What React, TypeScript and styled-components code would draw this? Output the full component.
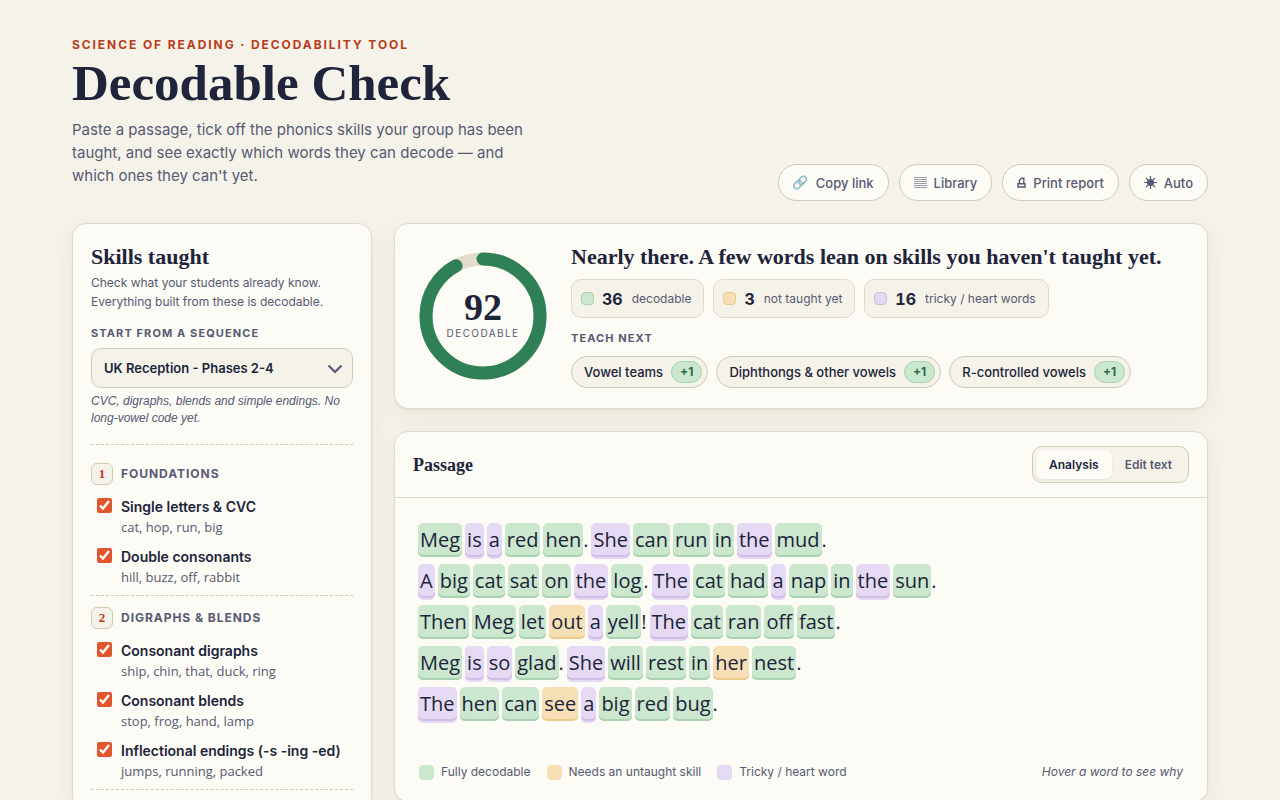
import React from "react";
import styled, { createGlobalStyle } from "styled-components";

const ink = "#20243a";
const soft = "#565a72";
const paper = "#fcfbf5";
const bg = "#f5f2e9";
const line = "#e0dacb";
const lineStrong = "#d3cab6";
const green = "#cbe7cd";
const amber = "#f7dfb5";
const purple = "#e5d9f3";
const serif = '"Liberation Serif", "Times New Roman", serif';
const sans = 'Inter, "Liberation Sans", sans-serif';
const reader = '"Open Sans", "Noto Sans", sans-serif';

type Kind = "ok" | "gap" | "heart";
const fill: Record<Kind, string> = { ok: green, gap: amber, heart: purple };
const edge: Record<Kind, string> = { ok: "#a9d3b0", gap: "#e9c98c", heart: "#cfbde8" };

const Global = createGlobalStyle`
  *, *::before, *::after { box-sizing: border-box; }
  body {
    margin: 0;
    background: ${bg};
    color: ${ink};
    font-family: ${sans};
    font-size: 14px;
    line-height: 20px;
  }
  h1, h2, h3, p, ul { margin: 0; padding: 0; }
  ul { list-style: none; }
  button, select { font: inherit; color: inherit; }
`;

const Page = styled.div`
  max-width: 1184px;
  margin: 0 auto;
  padding: 36px 24px;
`;

const Header = styled.header`
  display: flex;
  justify-content: space-between;
  align-items: flex-end;
  gap: 24px;
  margin-bottom: 22px;
`;

const Intro = styled.div`
  flex: 0 1 470px;
  padding-bottom: 14px;
`;

const Eyebrow = styled.p`
  font-size: 12px;
  line-height: 18px;
  font-weight: 700;
  letter-spacing: 0.16em;
  text-transform: uppercase;
  color: #b93c1c;
`;

const Title = styled.h1`
  font-family: ${serif};
  font-size: 51px;
  line-height: 58px;
  font-weight: 700;
  white-space: nowrap;
`;

const Lede = styled.p`
  margin-top: 6px;
  font-size: 15px;
  line-height: 23px;
  color: ${soft};
`;

const Actions = styled.div`
  display: flex;
  gap: 10px;
`;

const ActionButton = styled.button`
  display: flex;
  align-items: center;
  gap: 7px;
  height: 37px;
  padding: 0 14px;
  border: 1px solid ${lineStrong};
  border-radius: 19px;
  background: ${paper};
  color: ${soft};
  font-size: 13px;
  font-weight: 500;
  white-space: nowrap;
`;

const Emoji = styled.span`
  font-family: "Noto Color Emoji", sans-serif;
  font-size: 13px;
  font-weight: 400;
  opacity: 0.8;
`;

const Columns = styled.main`
  display: grid;
  grid-template-columns: 300px minmax(0, 1fr);
  gap: 22px;
  align-items: start;
`;

const Stack = styled.div`
  display: grid;
  gap: 22px;
`;

const Card = styled.section`
  background: ${paper};
  border: 1px solid ${line};
  border-radius: 14px;
  box-shadow: 0 1px 2px rgba(50, 45, 20, 0.05), 0 8px 24px rgba(50, 45, 20, 0.06);
`;

const SkillsCard = styled(Card)`
  padding: 20px 18px;
`;

const CardTitle = styled.h2`
  font-family: ${serif};
  font-size: 22px;
  line-height: 26px;
  font-weight: 700;
`;

const Hint = styled.p`
  margin-top: 3px;
  font-size: 12px;
  line-height: 19px;
  color: ${soft};
`;

const Label = styled.label`
  display: block;
  margin: 13px 0 6px;
  font-size: 11px;
  line-height: 18px;
  font-weight: 700;
  letter-spacing: 0.1em;
  text-transform: uppercase;
  color: ${soft};
`;

const SelectWrap = styled.div`
  position: relative;
  svg {
    position: absolute;
    right: 10px;
    top: 15px;
    pointer-events: none;
  }
`;

const Select = styled.select`
  display: block;
  width: 100%;
  height: 40px;
  padding: 0 32px 0 12px;
  appearance: none;
  border: 1px solid ${lineStrong};
  border-radius: 10px;
  background: ${bg};
  font-size: 13px;
  font-weight: 600;
`;

const Note = styled.p`
  margin-top: 5px;
  padding-bottom: 17px;
  border-bottom: 1px dashed ${lineStrong};
  font-family: "Liberation Sans", Arial, sans-serif;
  font-size: 12px;
  line-height: 17px;
  font-style: italic;
  color: ${soft};
`;

const Group = styled.section`
  padding: 11px 0 8px;
  border-bottom: 1px dashed ${lineStrong};
  &:first-of-type { padding-top: 18px; }
`;

const GroupTitle = styled.h3`
  display: flex;
  align-items: center;
  gap: 8px;
  margin-bottom: 11px;
  font-size: 12px;
  line-height: 22px;
  font-weight: 700;
  letter-spacing: 0.08em;
  text-transform: uppercase;
  color: ${soft};
`;

const Step = styled.span`
  width: 22px;
  height: 22px;
  border: 1px solid ${lineStrong};
  border-radius: 6px;
  background: ${bg};
  color: #b93c1c;
  font-family: ${serif};
  font-size: 13px;
  line-height: 20px;
  letter-spacing: 0;
  text-align: center;
`;

const SkillList = styled.ul`
  display: grid;
  gap: 9px;
`;

const Skill = styled.label`
  display: flex;
  gap: 9px;
  padding-left: 6px;
`;

const Tick = styled.input`
  flex: none;
  width: 15px;
  height: 15px;
  margin: 2px 0 0;
  accent-color: #e2552f;
`;

const SkillName = styled.span`
  display: block;
  font-size: 14px;
  line-height: 21px;
  font-weight: 600;
`;

const SkillSample = styled.span`
  display: block;
  font-family: ${reader};
  font-size: 13px;
  line-height: 20px;
  color: ${soft};
`;

const ScoreCard = styled(Card)`
  display: flex;
  align-items: center;
  gap: 24px;
  padding: 20px 24px;
`;

const Gauge = styled.div`
  position: relative;
  flex: none;
  width: 128px;
  height: 128px;
  svg { display: block; }
`;

const GaugeText = styled.div`
  position: absolute;
  inset: 0;
  display: flex;
  flex-direction: column;
  align-items: center;
  justify-content: center;
`;

const Score = styled.strong`
  font-family: ${serif};
  font-size: 38px;
  line-height: 34px;
`;

const ScoreLabel = styled.span`
  font-size: 10px;
  line-height: 18px;
  letter-spacing: 0.14em;
  text-transform: uppercase;
  color: ${soft};
`;

const Verdict = styled.div`
  flex: 1;
  min-width: 0;
`;

const Row = styled.div<{ $gap: number }>`
  display: flex;
  flex-wrap: wrap;
  gap: ${(p) => p.$gap}px;
`;

const Stat = styled.div`
  display: flex;
  align-items: center;
  gap: 8px;
  height: 39px;
  margin-top: 9px;
  padding: 0 12px 0 9px;
  border: 1px solid ${line};
  border-radius: 10px;
  background: ${bg};
  font-size: 12px;
  color: ${soft};
  strong {
    margin-right: 1px;
    color: ${ink};
    font-size: 16px;
    font-variant-numeric: tabular-nums;
  }
`;

const Swatch = styled.i<{ $kind: Kind; $size: number }>`
  width: ${(p) => p.$size}px;
  height: ${(p) => p.$size}px;
  border: 1px solid ${(p) => (p.$size < 15 ? edge[p.$kind] : fill[p.$kind])};
  border-radius: 4px;
  background: ${(p) => fill[p.$kind]};
`;

const Subhead = styled.h3`
  margin: 11px 0 9px;
  font-size: 11px;
  line-height: 18px;
  font-weight: 700;
  letter-spacing: 0.1em;
  text-transform: uppercase;
  color: ${soft};
`;

const Suggestion = styled.button`
  display: flex;
  align-items: center;
  gap: 8px;
  height: 32px;
  padding: 0 5px 0 12px;
  border: 1px solid ${lineStrong};
  border-radius: 16px;
  background: ${bg};
  font-size: 13px;
  font-weight: 500;
`;

const Gain = styled.span`
  padding: 0 8px;
  border: 1px solid #a9d3b0;
  border-radius: 11px;
  background: ${green};
  color: #2c6b47;
  font-size: 12px;
  line-height: 20px;
  font-weight: 700;
`;

const PassageHead = styled.div`
  display: flex;
  align-items: center;
  justify-content: space-between;
  padding: 14px 18px;
  border-bottom: 1px solid ${line};
`;

const PassageTitle = styled.h2`
  font-family: ${serif};
  font-size: 18px;
  line-height: 24px;
`;

const Segmented = styled.div`
  display: flex;
  padding: 3px;
  border: 1px solid ${lineStrong};
  border-radius: 10px;
  background: ${bg};
`;

const Segment = styled.button<{ $on?: boolean }>`
  height: 29px;
  padding: 0 13px;
  border: 0;
  border-radius: 7px;
  background: ${(p) => (p.$on ? paper : "transparent")};
  box-shadow: ${(p) => (p.$on ? "0 1px 2px rgba(60, 45, 20, 0.08)" : "none")};
  color: ${(p) => (p.$on ? ink : soft)};
  font-size: 12px;
  font-weight: 600;
`;

const Text = styled.div`
  display: grid;
  gap: 7px;
  padding: 25px 23px 41px;
  font-family: ${reader};
  font-size: 20px;
  line-height: 34px;
`;

const Sentence = styled.p`
  display: flex;
  flex-wrap: wrap;
  gap: 3px;
`;

const Word = styled.span<{ $kind: Kind }>`
  display: inline-block;
  height: 34px;
  padding: 0 2px;
  border-radius: 5px;
  background: ${(p) => fill[p.$kind]};
  box-shadow: inset 0 -2px 0 ${(p) => edge[p.$kind]}${(p) => (p.$kind === "heart" ? `, 0 2px 0 ${purple}` : "")};
`;

const Legend = styled.div`
  display: flex;
  align-items: center;
  gap: 16px;
  padding: 0 24px 19px;
  font-size: 12px;
  color: ${soft};
  em { margin-left: auto; }
`;

const LegendItem = styled.span`
  display: flex;
  align-items: center;
  gap: 7px;
`;

const groups = [
  {
    title: "Foundations",
    skills: [
      ["Single letters & CVC", "cat, hop, run, big"],
      ["Double consonants", "hill, buzz, off, rabbit"],
    ],
  },
  {
    title: "Digraphs & blends",
    skills: [
      ["Consonant digraphs", "ship, chin, that, duck, ring"],
      ["Consonant blends", "stop, frog, hand, lamp"],
      ["Inflectional endings (-s -ing -ed)", "jumps, running, packed"],
    ],
  },
];

const passage = [
  "Meg is a red hen. She can run in the mud.",
  "A big cat sat on the log. The cat had a nap in the sun.",
  "Then Meg let out a yell! The cat ran off fast.",
  "Meg is so glad. She will rest in her nest.",
  "The hen can see a big red bug.",
];

const heartWords = ["is", "a", "she", "the", "so"];
const untaught = ["out", "her", "see"];

function kindOf(word: string): Kind {
  const w = word.toLowerCase();
  if (heartWords.includes(w)) return "heart";
  return untaught.includes(w) ? "gap" : "ok";
}

const LinesIcon = () => (
  <svg width="13" height="13" viewBox="0 0 13 13" stroke="#9b9da8" aria-hidden>
    <path d="M0 1.5h13M0 3.5h13M0 5.5h13M0 7.5h13M0 9.5h13M0 11.5h13" />
  </svg>
);

const PrintIcon = () => (
  <svg width="9" height="11" viewBox="0 0 9 11" fill="none" stroke={soft} strokeWidth="1.4" aria-hidden>
    <path d="M1 6.8h7V10H1zM2.4 6.8V3.6L4.6 1.2H6.8V6.8" />
  </svg>
);

const SunIcon = () => (
  <svg width="13" height="13" viewBox="0 0 13 13" stroke={soft} strokeWidth="1.2" aria-hidden>
    <circle cx="6.5" cy="6.5" r="3" fill={soft} />
    <path d="M6.5 0v3M6.5 10v3M0 6.5h3M10 6.5h3M1.9 1.9l2 2M9.1 9.1l2 2M11.1 1.9l-2 2M3.9 9.1l-2 2" />
  </svg>
);

const actions: [React.ReactNode, string][] = [
  [<Emoji aria-hidden>🔗</Emoji>, "Copy link"],
  [<LinesIcon />, "Library"],
  [<PrintIcon />, "Print report"],
  [<SunIcon />, "Auto"],
];

const stats: [Kind, number, string][] = [
  ["ok", 36, "decodable"],
  ["gap", 3, "not taught yet"],
  ["heart", 16, "tricky / heart words"],
];

export default function App() {
  const radius = 57;
  const length = 2 * Math.PI * radius;
  return (
    <>
      <Global />
      <Page>
        <Header>
          <Intro>
            <Eyebrow>Science of Reading · Decodability Tool</Eyebrow>
            <Title>Decodable Check</Title>
            <Lede>
              Paste a passage, tick off the phonics skills your group has been taught, and see
              exactly which words they can decode — and which ones they can't yet.
            </Lede>
          </Intro>
          <Actions>
            {actions.map(([icon, label]) => (
              <ActionButton key={label} type="button">
                {icon}
                {label}
              </ActionButton>
            ))}
          </Actions>
        </Header>

        <Columns>
          <SkillsCard>
            <CardTitle>Skills taught</CardTitle>
            <Hint>
              Check what your students already know. Everything built from these is decodable.
            </Hint>
            <Label htmlFor="sequence">Start from a sequence</Label>
            <SelectWrap>
              <Select id="sequence" defaultValue="uk">
                <option value="uk">UK Reception - Phases 2-4</option>
              </Select>
              <svg width="16" height="12" viewBox="0 0 16 12" fill="none" stroke={soft} strokeWidth="2.2">
                <path d="M1.5 2.5 8 9 14.5 2.5" />
              </svg>
            </SelectWrap>
            <Note>CVC, digraphs, blends and simple endings. No long-vowel code yet.</Note>
            {groups.map((group, i) => (
              <Group key={group.title}>
                <GroupTitle>
                  <Step>{i + 1}</Step>
                  {group.title}
                </GroupTitle>
                <SkillList>
                  {group.skills.map(([name, sample]) => (
                    <li key={name}>
                      <Skill>
                        <Tick type="checkbox" defaultChecked />
                        <span>
                          <SkillName>{name}</SkillName>
                          <SkillSample>{sample}</SkillSample>
                        </span>
                      </Skill>
                    </li>
                  ))}
                </SkillList>
              </Group>
            ))}
          </SkillsCard>

          <Stack>
            <ScoreCard>
              <Gauge>
                <svg width="128" height="128" viewBox="0 0 128 128" fill="none" strokeWidth="13">
                  <circle cx="64" cy="64" r={radius} stroke="#e3dccd" />
                  <circle
                    cx="64"
                    cy="64"
                    r={radius}
                    stroke="#2f7f57"
                    strokeLinecap="round"
                    strokeDasharray={`${length * 0.92} ${length}`}
                    transform="rotate(-90 64 64)"
                  />
                </svg>
                <GaugeText>
                  <Score>92</Score>
                  <ScoreLabel>decodable</ScoreLabel>
                </GaugeText>
              </Gauge>
              <Verdict>
                <CardTitle>Nearly there. A few words lean on skills you haven't taught yet.</CardTitle>
                <Row $gap={9}>
                  {stats.map(([kind, count, label]) => (
                    <Stat key={label}>
                      <Swatch $kind={kind} $size={13} />
                      <strong>{count}</strong>
                      {label}
                    </Stat>
                  ))}
                </Row>
                <Subhead>Teach next</Subhead>
                <Row $gap={8}>
                  {["Vowel teams", "Diphthongs & other vowels", "R-controlled vowels"].map((s) => (
                    <Suggestion key={s} type="button">
                      {s}
                      <Gain>+1</Gain>
                    </Suggestion>
                  ))}
                </Row>
              </Verdict>
            </ScoreCard>

            <Card>
              <PassageHead>
                <PassageTitle>Passage</PassageTitle>
                <Segmented>
                  <Segment type="button" $on>Analysis</Segment>
                  <Segment type="button">Edit text</Segment>
                </Segmented>
              </PassageHead>
              <Text>
                {passage.map((sentence) => (
                  <Sentence key={sentence}>
                    {sentence.split(" ").map((token, i) => {
                      const word = token.replace(/[.!]/, "");
                      return (
                        <span key={i}>
                          <Word $kind={kindOf(word)}>{word}</Word>
                          {token.slice(word.length)}
                        </span>
                      );
                    })}
                  </Sentence>
                ))}
              </Text>
              <Legend>
                <LegendItem><Swatch $kind="ok" $size={15} />Fully decodable</LegendItem>
                <LegendItem><Swatch $kind="gap" $size={15} />Needs an untaught skill</LegendItem>
                <LegendItem><Swatch $kind="heart" $size={15} />Tricky / heart word</LegendItem>
                <em>Hover a word to see why</em>
              </Legend>
            </Card>
          </Stack>
        </Columns>
      </Page>
    </>
  );
}
